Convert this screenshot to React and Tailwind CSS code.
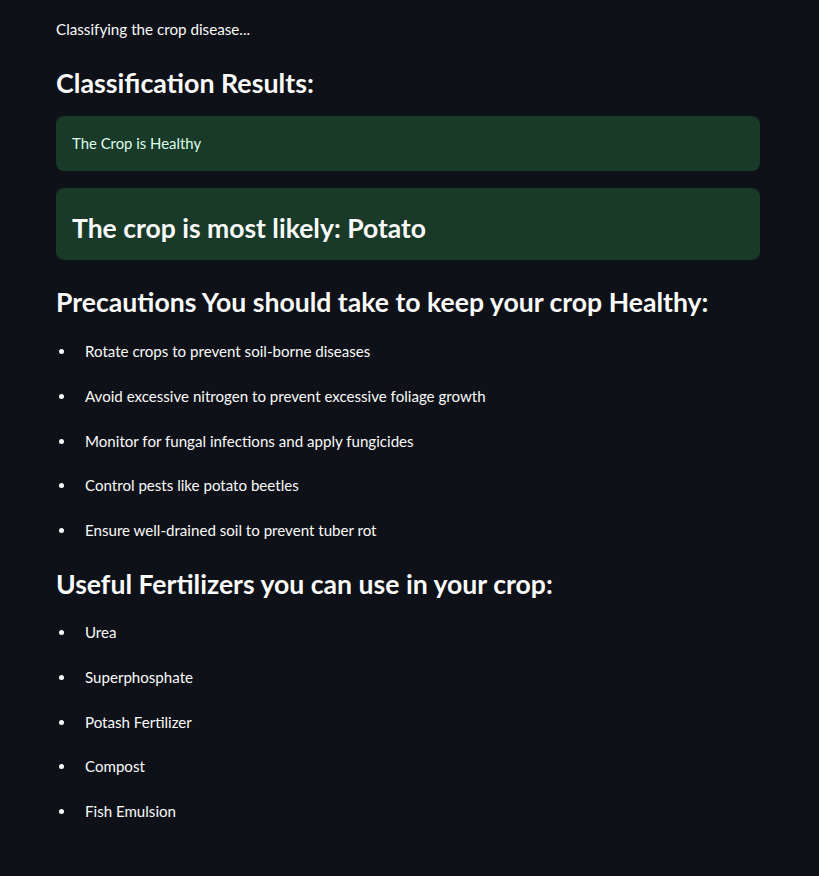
const precautions = [
  'Rotate crops to prevent soil-borne diseases',
  'Avoid excessive nitrogen to prevent excessive foliage growth',
  'Monitor for fungal infections and apply fungicides',
  'Control pests like potato beetles',
  'Ensure well-drained soil to prevent tuber rot',
];

const fertilizers = ['Urea', 'Superphosphate', 'Potash Fertilizer', 'Compost', 'Fish Emulsion'];

const BulletList = ({ items, className = '' }) => (
  <ul className={`flex flex-col gap-[23.75px] ${className}`}>
    {items.map((item) => (
      <li key={item} className="flex items-center h-[21px] text-[15.1px] leading-[21px]">
        <span className="w-[5px] h-[5px] rounded-full bg-[#fafafa] ml-[3px] mr-[21px]" />
        {item}
      </li>
    ))}
  </ul>
);

export default function App() {
  return (
    <div
      className="min-h-[876px] w-full bg-[#0e1117] text-[#fafafa]"
      style={{ fontFamily: 'Lato, "Noto Sans", sans-serif' }}
    >
      <div className="ml-[56px] w-[704px] pt-[19px] pb-10">
        <p className="text-[15.2px] leading-[21px]">Classifying the crop disease...</p>

        <h3 className="mt-[26px] text-[26.8px] leading-[34px] font-bold">Classification Results:</h3>

        {/* success boxes */}
        <div className="mt-[16px] h-[55px] px-4 flex items-center rounded-lg bg-[#1a3a29] text-[#dffde9] text-[14.9px]">
          The Crop is Healthy
        </div>
        <div className="mt-[17px] h-[72px] px-4 pt-[8px] flex items-center rounded-lg bg-[#1a3a29]">
          <h3 className="text-[26.5px] leading-[34px] font-bold text-[#fafafa]">The crop is most likely: Potato</h3>
        </div>

        <h3 className="mt-[25px] text-[26.6px] leading-[34px] font-bold">
          Precautions You should take to keep your crop Healthy:
        </h3>
        <BulletList items={precautions} className="mt-[22px]" />

        <h3 className="mt-[26px] text-[26.6px] leading-[34px] font-bold">
          Useful Fertilizers you can use in your crop:
        </h3>
        <BulletList items={fertilizers} className="mt-[21px]" />
      </div>
    </div>
  );
}
